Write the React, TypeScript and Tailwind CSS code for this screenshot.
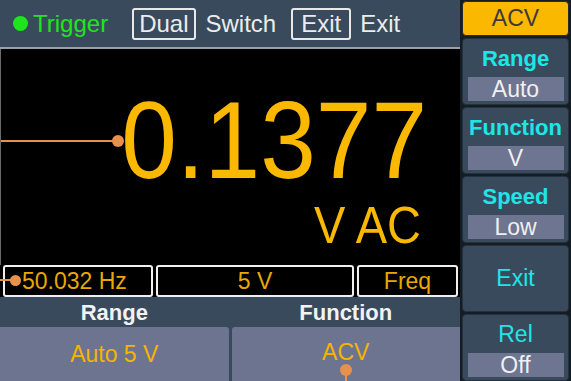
import React from 'react';

const font = { fontFamily: '"Liberation Sans", Arial, sans-serif' };

function SideButton({ label, value, bold = true }: { label: string; value?: string; bold?: boolean }) {
  return (
    <div className="h-[67px] rounded-[4px] border border-[#24313e] bg-[#394a5d] flex flex-col items-center">
      {value ? (
        <>
          <div className={`h-[38px] flex items-center text-[22px] text-[#1ee6e6] ${bold ? 'font-bold' : 'text-[23px]'}`}>{label}</div>
          <div className="w-[96px] h-[24px] bg-[#6e7591] flex items-center justify-center text-[23px] text-[#f0f0f0]">{value}</div>
        </>
      ) : (
        <div className="flex-1 flex items-center text-[23px] text-[#1ee6e6]">{label}</div>
      )}
    </div>
  );
}

export default function App() {
  return (
    <div className="w-[571px] h-[381px] bg-black flex overflow-hidden" style={font}>
      {/* left: main display */}
      <div className="w-[460px] flex flex-col">
        {/* status bar */}
        <div className="h-[49px] bg-[#394a5c] border-b-2 border-[#9ba1a8] flex items-center pl-[13px] text-[24px] text-[#ececec]">
          <span className="w-[15px] h-[15px] rounded-full bg-[#1ee61e] mr-[5px]"></span>
          <span className="text-[#1ee61e]">Trigger</span>
          <span className="ml-[24px] h-[32px] px-[5px] border-2 border-[#e8e8e8] rounded-[3px] flex items-center">Dual</span>
          <span className="ml-[10px]">Switch</span>
          <span className="ml-[15px] h-[32px] px-[8px] border-2 border-[#e8e8e8] rounded-[3px] flex items-center">Exit</span>
          <span className="ml-[9px]">Exit</span>
        </div>

        {/* reading */}
        <div className="relative h-[216px] border-l border-[#6b6b6b] flex flex-col items-end text-[#fbb800]">
          <div className="absolute left-0 top-[91px] w-[117px] h-[2px] bg-[#e8914a]"></div>
          <div className="absolute left-[111px] top-[86px] w-[12px] h-[12px] rounded-full bg-[#e8914a]"></div>
          <div className="mt-[50px] pr-[33px] text-[100px] leading-[0.8] scale-y-[1.1]">0.1377</div>
          <div className="mt-[27px] pr-[39px] text-[47px] leading-[0.8] scale-y-[1.1]">V AC</div>
        </div>

        {/* info row */}
        <div className="h-[32px] flex gap-[3px] pl-[3px] pr-[2px] text-[23px] text-[#e8a800]">
          <div className="relative w-[150px] border-2 border-[#f0f0f0] rounded-[3px] flex items-center pl-[17px]">
            <div className="absolute left-[-5px] top-[12px] w-[14px] h-[2px] bg-[#e8914a]"></div>
            <div className="absolute left-[5px] top-[8px] w-[11px] h-[11px] rounded-full bg-[#e8914a]"></div>
            50.032 Hz
          </div>
          <div className="w-[198px] border-2 border-[#f0f0f0] rounded-[3px] flex items-center justify-center">5 V</div>
          <div className="flex-1 border-2 border-[#f0f0f0] rounded-[3px] flex items-center justify-center">Freq</div>
        </div>

        {/* soft keys */}
        <div className="flex-1 bg-[#394a5c] flex gap-[3px]">
          <div className="flex-1 flex flex-col">
            <div className="h-[30px] flex items-center justify-center text-[22px] font-bold text-[#f2f2f2]">Range</div>
            <div className="flex-1 bg-[#6d7490] rounded-tr-[3px] flex items-center justify-center text-[23px] text-[#f5b400]">Auto 5 V</div>
          </div>
          <div className="flex-1 flex flex-col">
            <div className="h-[30px] flex items-center justify-center text-[22px] font-bold text-[#f2f2f2]">Function</div>
            <div className="relative flex-1 bg-[#6d7490] rounded-tl-[3px] flex items-center justify-center text-[23px] text-[#f5b400] pb-[3px]">
              ACV
              <div className="absolute left-[108px] top-[37px] w-[12px] h-[12px] rounded-full bg-[#e8914a]"></div>
              <div className="absolute left-[113px] top-[45px] w-[2px] h-[12px] bg-[#e8914a]"></div>
            </div>
          </div>
        </div>
      </div>

      {/* right: menu */}
      <div className="flex-1 flex flex-col gap-[2px] pl-[2px] pt-[1px] pr-[2px] bg-[#141c24]">
        <div className="h-[35px] rounded-[4px] border border-[#2a2a2a] bg-[#fbb800] flex items-center justify-center text-[23px] text-[#3b3b3b]">ACV</div>
        <SideButton label="Range" value="Auto" />
        <SideButton label="Function" value="V" />
        <SideButton label="Speed" value="Low" />
        <SideButton label="Exit" />
        <SideButton label="Rel" value="Off" bold={false} />
      </div>
    </div>
  );
}
